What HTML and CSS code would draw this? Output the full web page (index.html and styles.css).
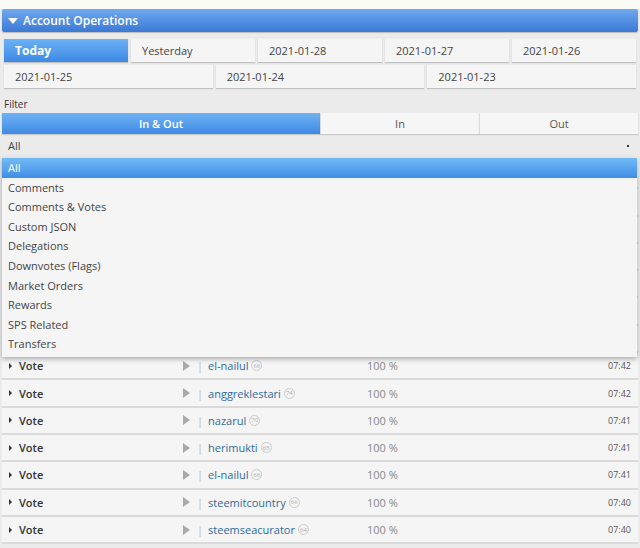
FILE: index.html
```html
<!DOCTYPE html>
<html>
<head>
<meta charset="utf-8">
<link rel="stylesheet" href="styles.css">
</head>
<body>
<div class="topstrip"></div>
<div class="page">
  <div class="panel-head"><span class="caret-down"></span>Account Operations</div>

  <div class="dates five">
    <div class="date active">Today</div>
    <div class="date">Yesterday</div>
    <div class="date">2021-01-28</div>
    <div class="date">2021-01-27</div>
    <div class="date">2021-01-26</div>
  </div>
  <div class="dates three">
    <div class="date">2021-01-25</div>
    <div class="date">2021-01-24</div>
    <div class="date">2021-01-23</div>
  </div>

  <div class="filter-label">Filter</div>
  <div class="tabs">
    <div class="tab active">In &amp; Out</div>
    <div class="tab">In</div>
    <div class="tab">Out</div>
  </div>

  <div class="select-wrap">
    <div class="select"><span>All</span><span class="sel-arrow"></span></div>
    <div class="dropdown">
      <div class="opt selected">All</div>
      <div class="opt">Comments</div>
      <div class="opt">Comments &amp; Votes</div>
      <div class="opt">Custom JSON</div>
      <div class="opt">Delegations</div>
      <div class="opt">Downvotes (Flags)</div>
      <div class="opt">Market Orders</div>
      <div class="opt">Rewards</div>
      <div class="opt">SPS Related</div>
      <div class="opt">Transfers</div>
    </div>

    <div class="ops">
      <div class="row covered"><div class="c-type"><span class="caret-right"></span>Vote</div><div class="c-user"><span class="play"></span><span class="pipe">|</span><a class="user">el-nailul</a><span class="badge">66</span></div><div class="c-pct">100 %</div><div class="c-time">07:44</div></div>
      <div class="row covered"><div class="c-type"><span class="caret-right"></span>Vote</div><div class="c-user"><span class="play"></span><span class="pipe">|</span><a class="user">nazarul</a><span class="badge">70</span></div><div class="c-pct">100 %</div><div class="c-time">07:44</div></div>
      <div class="row covered"><div class="c-type"><span class="caret-right"></span>Vote</div><div class="c-user"><span class="play"></span><span class="pipe">|</span><a class="user">herimukti</a><span class="badge">65</span></div><div class="c-pct">100 %</div><div class="c-time">07:43</div></div>
      <div class="row covered"><div class="c-type"><span class="caret-right"></span>Vote</div><div class="c-user"><span class="play"></span><span class="pipe">|</span><a class="user">steemitcountry</a><span class="badge">66</span></div><div class="c-pct">100 %</div><div class="c-time">07:43</div></div>
      <div class="row covered"><div class="c-type"><span class="caret-right"></span>Vote</div><div class="c-user"><span class="play"></span><span class="pipe">|</span><a class="user">steemseacurator</a><span class="badge">64</span></div><div class="c-pct">100 %</div><div class="c-time">07:43</div></div>
      <div class="row covered"><div class="c-type"><span class="caret-right"></span>Vote</div><div class="c-user"><span class="play"></span><span class="pipe">|</span><a class="user">anggreklestari</a><span class="badge">74</span></div><div class="c-pct">100 %</div><div class="c-time">07:43</div></div>
      <div class="row covered"><div class="c-type"><span class="caret-right"></span>Vote</div><div class="c-user"><span class="play"></span><span class="pipe">|</span><a class="user">nazarul</a><span class="badge">70</span></div><div class="c-pct">100 %</div><div class="c-time">07:42</div></div>
      <div class="row"><div class="c-type"><span class="caret-right"></span>Vote</div><div class="c-user"><span class="play"></span><span class="pipe">|</span><a class="user">el-nailul</a><span class="badge">66</span></div><div class="c-pct">100 %</div><div class="c-time">07:42</div></div>
      <div class="row"><div class="c-type"><span class="caret-right"></span>Vote</div><div class="c-user"><span class="play"></span><span class="pipe">|</span><a class="user">anggreklestari</a><span class="badge">74</span></div><div class="c-pct">100 %</div><div class="c-time">07:42</div></div>
      <div class="row"><div class="c-type"><span class="caret-right"></span>Vote</div><div class="c-user"><span class="play"></span><span class="pipe">|</span><a class="user">nazarul</a><span class="badge">70</span></div><div class="c-pct">100 %</div><div class="c-time">07:41</div></div>
      <div class="row"><div class="c-type"><span class="caret-right"></span>Vote</div><div class="c-user"><span class="play"></span><span class="pipe">|</span><a class="user">herimukti</a><span class="badge">65</span></div><div class="c-pct">100 %</div><div class="c-time">07:41</div></div>
      <div class="row"><div class="c-type"><span class="caret-right"></span>Vote</div><div class="c-user"><span class="play"></span><span class="pipe">|</span><a class="user">el-nailul</a><span class="badge">66</span></div><div class="c-pct">100 %</div><div class="c-time">07:41</div></div>
      <div class="row"><div class="c-type"><span class="caret-right"></span>Vote</div><div class="c-user"><span class="play"></span><span class="pipe">|</span><a class="user">steemitcountry</a><span class="badge">66</span></div><div class="c-pct">100 %</div><div class="c-time">07:40</div></div>
      <div class="row"><div class="c-type"><span class="caret-right"></span>Vote</div><div class="c-user"><span class="play"></span><span class="pipe">|</span><a class="user">steemseacurator</a><span class="badge">64</span></div><div class="c-pct">100 %</div><div class="c-time">07:40</div></div>
    </div>
  </div>
</div>
</body>
</html>
```

FILE: styles.css
```css
html, body {
  margin: 0;
  padding: 0;
}
body {
  background: #ebebeb;
  font-family: "Open Sans", "DejaVu Sans", sans-serif;
  color: #444;
  font-size: 11px;
  overflow: hidden;
  height: 548px;
}
.topstrip {
  height: 9px;
  background: #fbfbf6;
}
.page {
  padding: 0 2px;
}
.panel-head {
  height: 23px;
  display: flex;
  align-items: center;
  background: linear-gradient(#6fa9ef, #3b79d5);
  color: #fff;
  font-size: 12px;
  font-weight: 600;
  border-radius: 2px;
  padding-left: 6px;
  box-shadow: 0 1px 1px rgba(0,0,0,0.2);
}
.caret-down {
  width: 0;
  height: 0;
  border-left: 5px solid transparent;
  border-right: 5px solid transparent;
  border-top: 6px solid #fff;
  margin-right: 5px;
}
.dates {
  display: grid;
  gap: 3px;
  padding: 0 2px;
}
.dates.five {
  grid-template-columns: repeat(5, 1fr);
  margin-top: 7px;
}
.dates.three {
  grid-template-columns: repeat(3, 1fr);
  margin-top: 3px;
}
.date {
  height: 23px;
  display: flex;
  align-items: center;
  padding-left: 11px;
  background: #f5f5f5;
  box-shadow: 0 1px 1px rgba(0,0,0,0.18);
  color: #444;
  font-size: 11px;
}
.date.active {
  background: linear-gradient(#6cb1f5, #3d89e5);
  color: #fff;
  font-weight: 700;
  font-size: 12px;
}
.filter-label {
  font-size: 10px;
  color: #333;
  margin-top: 9px;
  padding-left: 2px;
  height: 16px;
  line-height: 14px;
}
.tabs {
  display: grid;
  grid-template-columns: 2fr 1fr 1fr;
  height: 21px;
}
.tab {
  display: flex;
  align-items: center;
  justify-content: center;
  background: #f6f6f6;
  color: #555;
  border-left: 1px solid #dcdcdc;
  box-shadow: 0 1px 1px rgba(0,0,0,0.15);
  font-size: 11px;
}
.tab.active {
  background: linear-gradient(#70b2f4, #3e8ae4);
  color: #fff;
  font-weight: 600;
  border-left: none;
}
.select-wrap {
  position: relative;
}
.select {
  height: 19px;
  margin-top: 2px;
  display: flex;
  align-items: center;
  justify-content: space-between;
  padding: 0 8px 0 6px;
  color: #444;
  font-size: 11px;
}
.sel-arrow {
  width: 2px;
  height: 2px;
  background: #333;
  margin-right: 1px;
}
.dropdown {
  position: absolute;
  top: 22px;
  left: 0;
  right: 1px;
  background: #f5f5f5;
  box-shadow: 0 2px 5px rgba(0,0,0,0.3);
  z-index: 5;
  padding-bottom: 3px;
}
.opt {
  height: 19.6px;
  line-height: 19.6px;
  padding-left: 6px;
  font-size: 11px;
  color: #444;
}
.opt.selected {
  background: linear-gradient(#72bbf6, #3f8de5);
  color: #fff;
}
.ops {
  margin-top: 7px;
}
.row {
  height: 25.3px;
  display: flex;
  align-items: center;
  background: #f5f5f5;
  border-bottom: 2px solid #dadada;
  font-size: 11px;
}
.row.covered > * {
  visibility: hidden;
}
.c-type {
  width: 181px;
  display: flex;
  align-items: center;
  padding-left: 7px;
  box-sizing: border-box;
  color: #333;
  font-weight: 600;
}
.caret-right {
  width: 0;
  height: 0;
  border-top: 3px solid transparent;
  border-bottom: 3px solid transparent;
  border-left: 3px solid #333;
  margin-right: 7px;
}
.c-user {
  width: 184px;
  display: flex;
  align-items: center;
}
.play {
  width: 0;
  height: 0;
  border-top: 5px solid transparent;
  border-bottom: 5px solid transparent;
  border-left: 7px solid #a9a9a9;
  margin-right: 7px;
}
.pipe {
  color: #b9b9b9;
  margin-right: 5px;
}
.user {
  color: #2f6a9c;
}
.badge {
  display: inline-flex;
  align-items: center;
  justify-content: center;
  width: 9px;
  height: 9px;
  border: 1px solid #ccc;
  border-radius: 50%;
  font-size: 6px;
  color: #aaa;
  margin-left: 3px;
}
.c-pct {
  flex: 1;
  color: #888;
}
.c-time {
  font-size: 9px;
  color: #555;
  padding-right: 7px;
}
```
